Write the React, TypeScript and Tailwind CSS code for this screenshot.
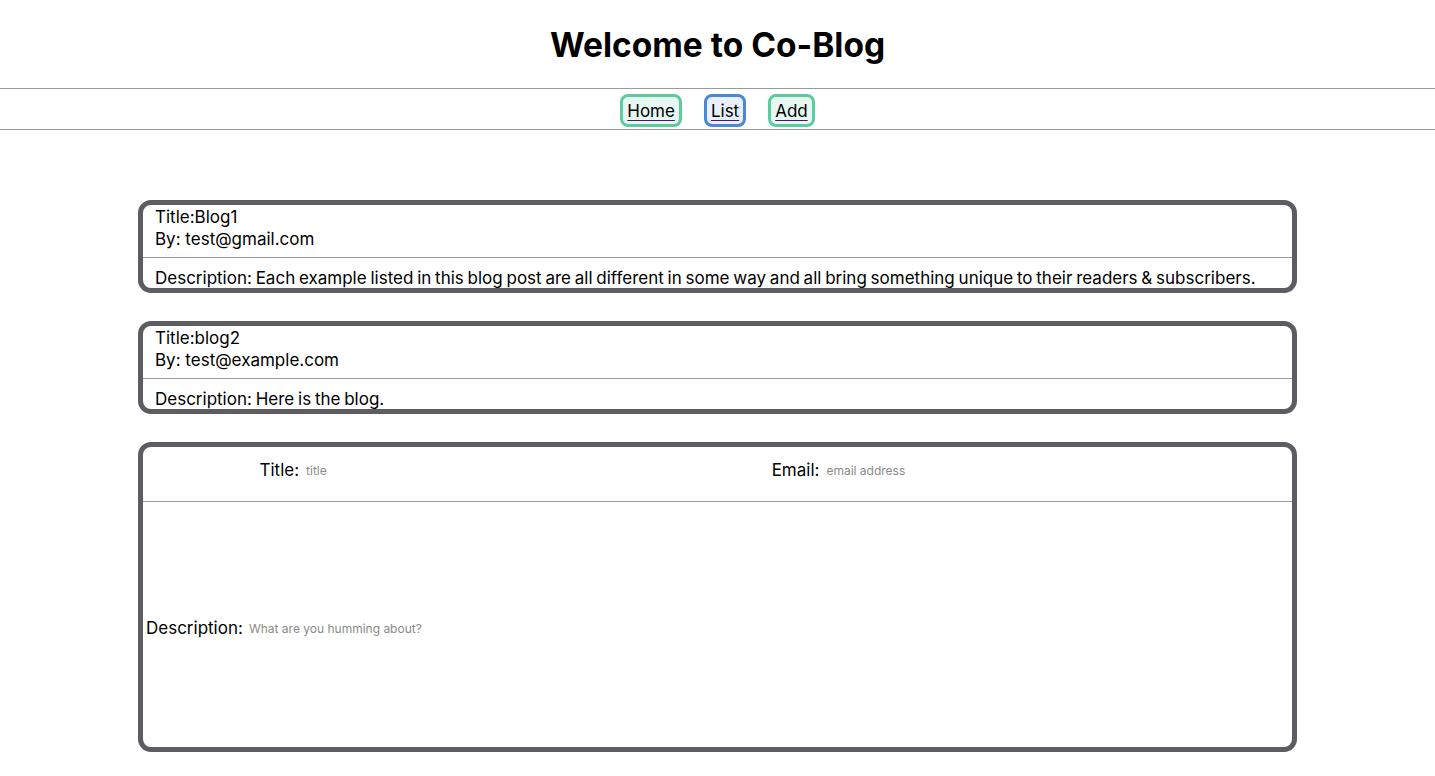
import React from "react"

type Blog = {
  title: string
  email: string
  description: string
}

const blogs: Blog[] = [
  {
    title: "Blog1",
    email: "test@gmail.com",
    description:
      "Each example listed in this blog post are all different in some way and all bring something unique to their readers & subscribers.",
  },
  {
    title: "blog2",
    email: "test@example.com",
    description: "Here is the blog.",
  },
]

function NavLink({ label, active }: { label: string; active?: boolean }) {
  return (
    <a
      href="#"
      className={`px-[4px] pt-[2px] pb-[1px] rounded-[8px] border-[3px] text-black underline decoration-[#3b1a78] underline-offset-[3px] leading-[24px] ${
        active ? "border-[#4a87d8] bg-[#e9f0fb]" : "border-[#5ccc9f] bg-[#e9f7f2]"
      }`}
    >
      {label}
    </a>
  )
}

function BlogCard({ blog }: { blog: Blog }) {
  return (
    <div className="border-[5px] border-[#5d5c63] rounded-[13px] h-[93px] overflow-hidden">
      <div className="px-[12px] pt-[1px] leading-[22px]">
        <div>Title:{blog.title}</div>
        <div>By: {blog.email}</div>
      </div>
      <hr className="mt-[7px] border-t border-[#9a9a9a]" />
      <div className="px-[12px] pt-[9px] leading-[22px] [word-spacing:-1px]">
        Description: {blog.description}
      </div>
    </div>
  )
}

export default function App() {
  return (
    <div className="min-h-screen bg-white text-black font-['Inter',sans-serif] text-[17px]">
      <h1 className="text-center text-[33.5px] font-bold pt-[24px] pb-[22px] leading-[42px]">
        Welcome to Co-Blog
      </h1>

      <div className="border-t border-b border-[#9a9a9a] flex justify-center items-start gap-[22px] pt-[5px] pb-[2px]">
        <NavLink label="Home" />
        <NavLink label="List" active />
        <NavLink label="Add" />
      </div>

      <div className="w-[1159px] mx-auto mt-[70px] flex flex-col gap-[28px] pb-[26px]">
        {blogs.map((b) => (
          <BlogCard key={b.title} blog={b} />
        ))}

        {/* ADD FORM */}
        <div className="border-[5px] border-[#5d5c63] rounded-[13px] h-[310px] flex flex-col">
          <div className="flex justify-evenly items-start h-[55px] pt-[11px] border-b border-[#9a9a9a]">
            <div className="flex items-center gap-[7px]">
              <span>Title:</span>
              <input
                placeholder="title"
                className="w-[349px] text-[12px] outline-none placeholder:text-[#8a8a8a]"
              />
            </div>
            <div className="flex items-center gap-[7px]">
              <span>Email:</span>
              <input
                placeholder="email address"
                className="w-[349px] text-[12px] outline-none placeholder:text-[#8a8a8a]"
              />
            </div>
          </div>
          <div className="flex-1 flex items-center gap-[6px] pl-[3px] pt-[8px]">
            <span>Description:</span>
            <input
              placeholder="What are you humming about?"
              className="flex-1 text-[12px] outline-none placeholder:text-[#8a8a8a]"
            />
          </div>
        </div>
      </div>
    </div>
  )
}
